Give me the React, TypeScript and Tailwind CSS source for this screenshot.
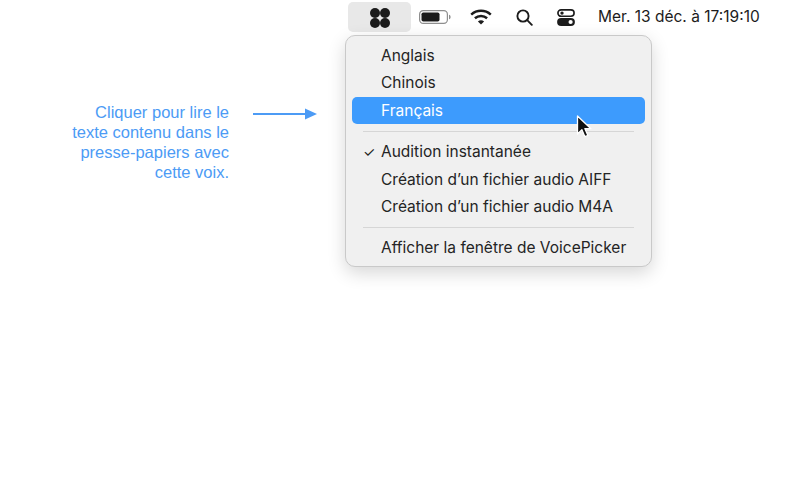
import React from "react";

const sf = "font-['Inter','Noto_Sans',sans-serif]";

function AppGlyph() {
  return (
    <svg width="22" height="22" viewBox="0 0 22 22" fill="#1c1c1c">
      <circle cx="6" cy="6" r="5" />
      <circle cx="16" cy="6" r="5" />
      <circle cx="6" cy="16" r="5" />
      <circle cx="16" cy="16" r="5" />
    </svg>
  );
}

function Battery() {
  return (
    <svg width="32" height="14" viewBox="0 0 32 14">
      <rect x="0.6" y="0.6" width="27.8" height="12.8" rx="3.6" fill="none" stroke="#8e8e8e" strokeWidth="1.2" />
      <rect x="2.5" y="2.5" width="18" height="9" rx="1.8" fill="#1c1c1c" />
      <path d="M30 4.8c1 .3 1.6 1.1 1.6 2.2s-.6 1.9-1.6 2.2z" fill="#8e8e8e" />
    </svg>
  );
}

function Wifi() {
  return (
    <svg width="22" height="16" viewBox="0 0 22 16" fill="none" stroke="#1c1c1c" strokeWidth="2.5">
      <path d="M1.2 5.6C6.8.6 15.2.6 20.8 5.6" />
      <path d="M4.9 9.2c3.5-3 8.7-3 12.2 0" />
      <path d="M11 15.6 7.9 12.4c1.8-1.5 4.4-1.5 6.2 0z" fill="#1c1c1c" stroke="none" />
    </svg>
  );
}

function Search() {
  return (
    <svg width="17" height="17" viewBox="0 0 17 17" fill="none" stroke="#1c1c1c" strokeWidth="1.9" strokeLinecap="round">
      <circle cx="7" cy="7" r="5.6" />
      <path d="m11.2 11.2 4.6 4.6" />
    </svg>
  );
}

function Controls() {
  return (
    <svg width="18" height="17" viewBox="0 0 18 17">
      <rect x="0.9" y="0.9" width="16.2" height="6.4" rx="3.2" fill="none" stroke="#1c1c1c" strokeWidth="1.6" />
      <circle cx="5" cy="4.1" r="1.7" fill="#1c1c1c" />
      <rect x="0.1" y="9" width="17.8" height="8" rx="4" fill="#1c1c1c" />
      <circle cx="13.6" cy="13" r="2.1" fill="#fff" />
    </svg>
  );
}

function Cursor() {
  return (
    <svg width="16" height="24" viewBox="0 0 16 24">
      <path
        d="M1.5 1v18l4.4-4.2 3 6.9 3-1.3-3-6.7h6z"
        fill="#111"
        stroke="#fff"
        strokeWidth="1.3"
        strokeLinejoin="round"
      />
    </svg>
  );
}

function Row({ label, checked, active }: { label: string; checked?: boolean; active?: boolean }) {
  return (
    <div
      className={`flex h-[27.4px] items-center rounded-[5px] pl-[29px] text-[15.5px] leading-none relative ${
        active ? "bg-[#3d9bfd] text-white" : "text-[#242424]"
      }`}
    >
      {checked && <span className="absolute left-[11px] text-[14px]">✓</span>}
      {label}
    </div>
  );
}

function Separator() {
  return <div className="mx-[11px] my-[6.5px] h-px bg-[#d6d6d6]" />;
}

export default function App() {
  return (
    <div className={`relative h-[500px] w-[800px] overflow-hidden bg-white ${sf}`}>
      <div className="flex h-[34px] items-center pl-[348px] text-[#1c1c1c]">
        <div className="flex h-[30px] w-[63px] items-center justify-center rounded-[5px] bg-[#e8e8e8] pt-px">
          <AppGlyph />
        </div>
        <div className="ml-[8px] flex items-center">
          <Battery />
        </div>
        <div className="ml-[19px] flex items-center">
          <Wifi />
        </div>
        <div className="ml-[24px] flex items-center">
          <Search />
        </div>
        <div className="ml-[24px] flex items-center">
          <Controls />
        </div>
        <span className="ml-[23px] whitespace-nowrap text-[15.5px]">Mer. 13 déc. à 17:19:10</span>
      </div>

      <div className="flex pt-[68px]">
        <p className="w-[229px] text-right font-['Liberation_Sans',sans-serif] text-[16.5px] leading-[20px] text-[#4c9bf5]">
          Cliquer pour lire le
          <br />
          texte contenu dans le
          <br />
          presse-papiers avec
          <br />
          cette voix.
        </p>
        <svg className="ml-[24px] mt-[5px]" width="64" height="14" viewBox="0 0 64 14">
          <path d="M0 7h54" stroke="#4c9bf5" strokeWidth="2" />
          <path d="M52 1.5 64 7 52 12.5z" fill="#4c9bf5" />
        </svg>
      </div>

      <div className="absolute left-[345px] top-[35px] h-[232px] w-[307px] rounded-[10px] border border-[#c9c9c9] bg-[#f0f0f0] px-[6px] pt-[6px] shadow-[0_6px_18px_rgba(0,0,0,0.16)]">
        <Row label="Anglais" />
        <Row label="Chinois" />
        <Row label="Français" active />
        <Separator />
        <Row label="Audition instantanée" checked />
        <Row label="Création d’un fichier audio AIFF" />
        <Row label="Création d’un fichier audio M4A" />
        <Separator />
        <Row label="Afficher la fenêtre de VoicePicker" />
      </div>

      <div className="absolute left-[576px] top-[115px]">
        <Cursor />
      </div>
    </div>
  );
}
